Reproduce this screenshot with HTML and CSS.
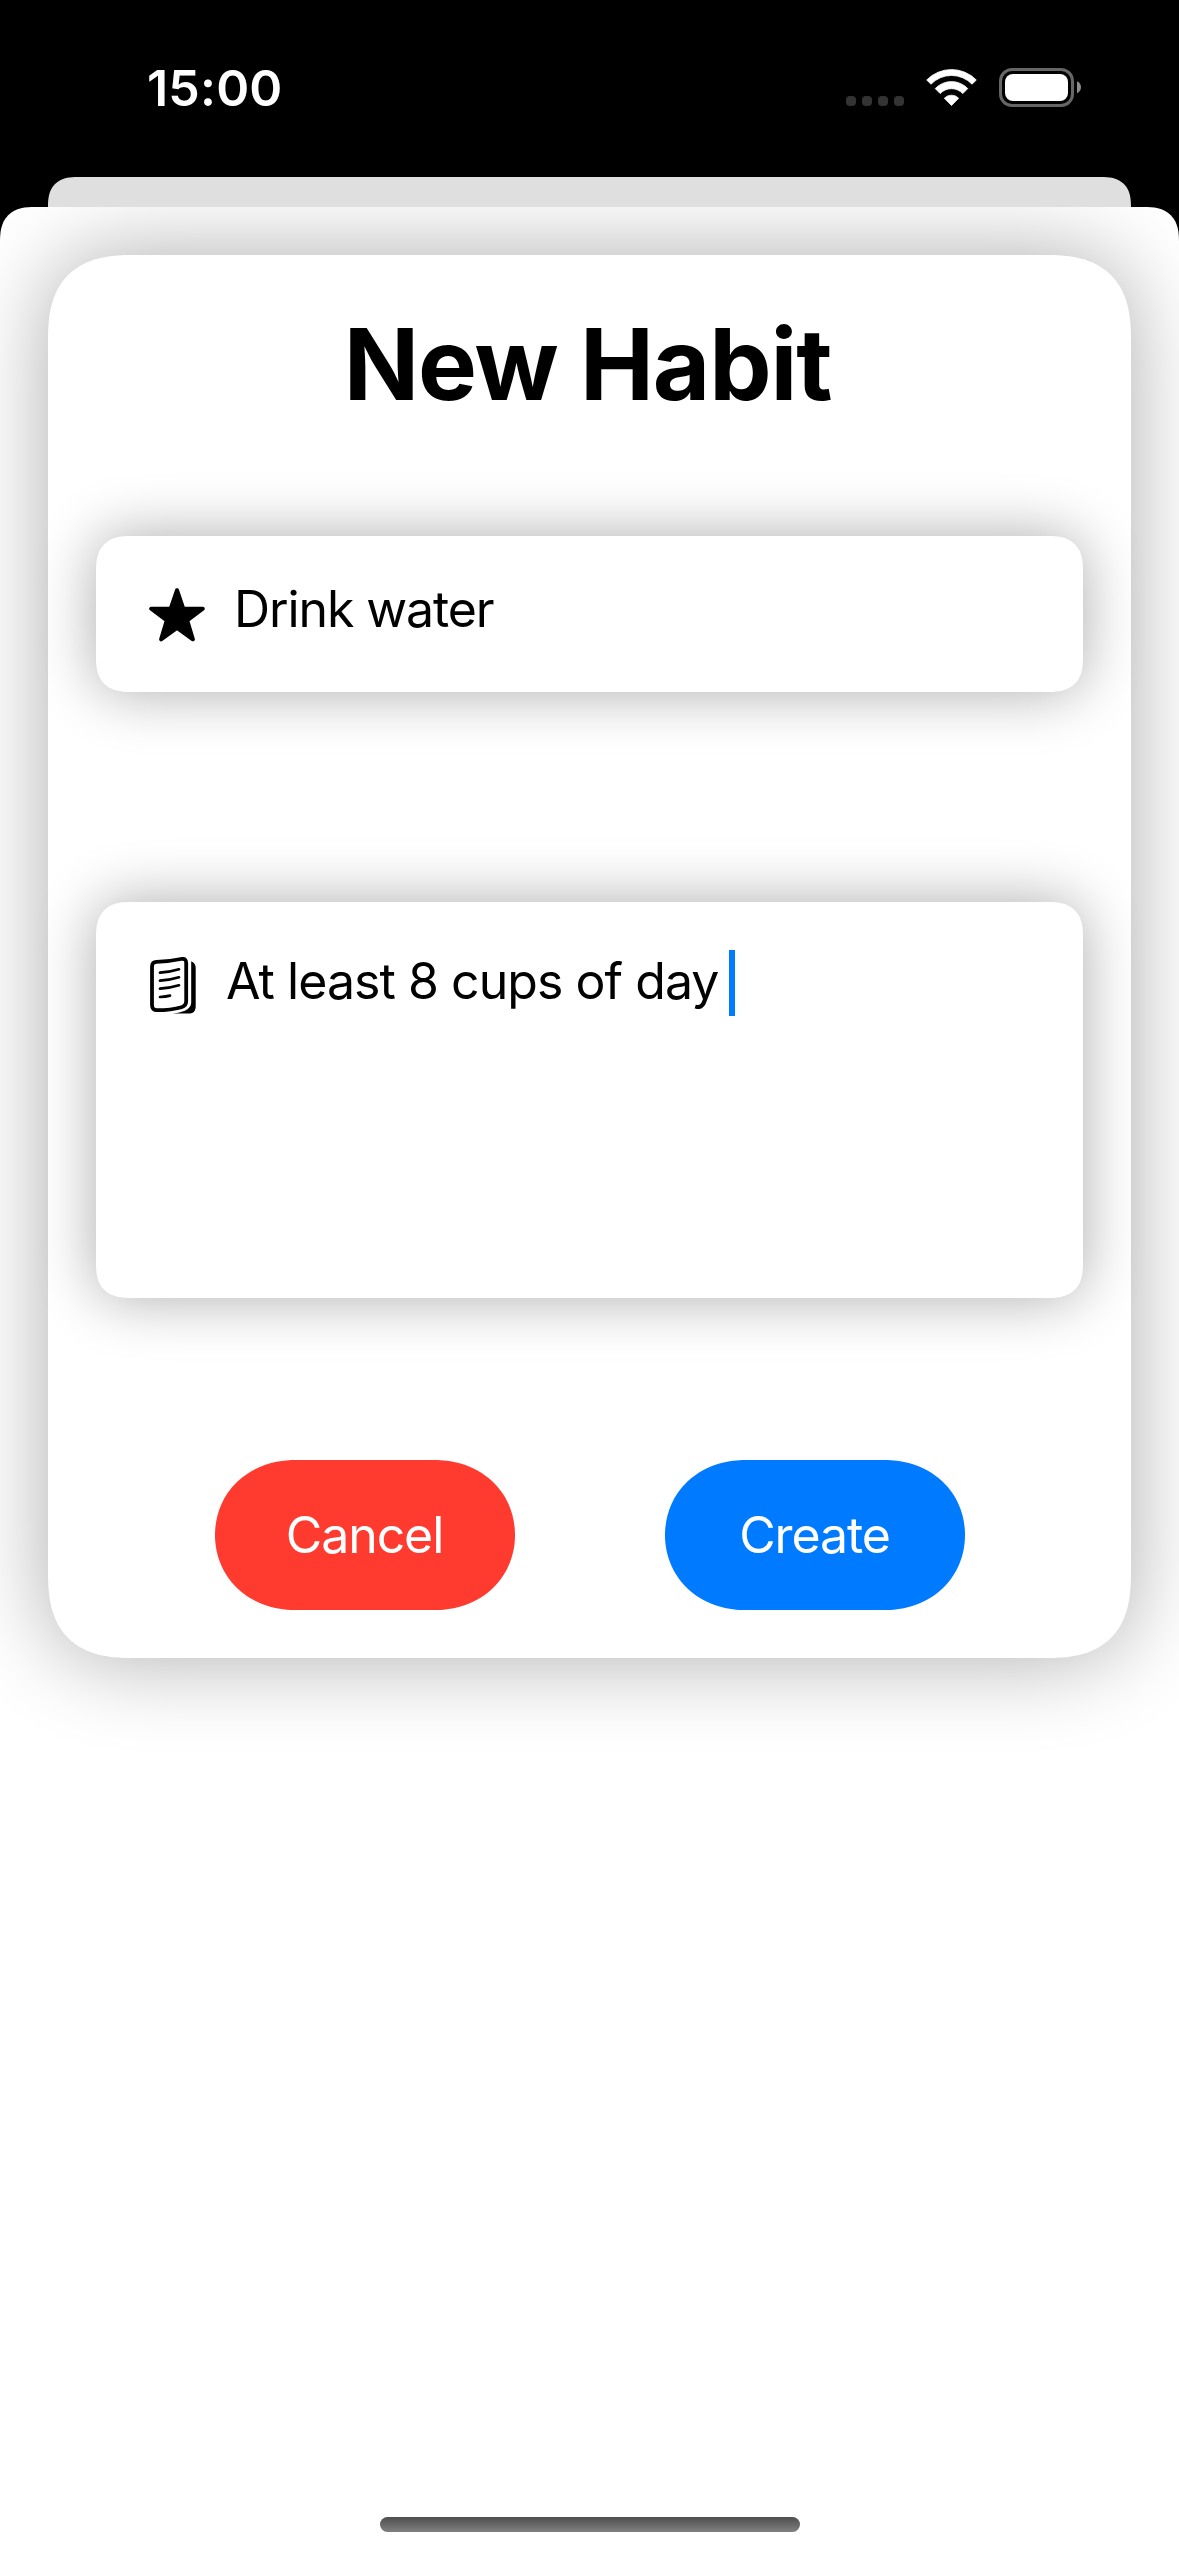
FILE: index.html
```html
<!DOCTYPE html>
<html lang="en">
<head>
<meta charset="utf-8">
<title>New Habit</title>
<link rel="stylesheet" href="styles.css">
</head>
<body>
<div class="screen">
  <header class="status-bar">
    <span class="time">15:00</span>
    <div class="indicators">
      <div class="cellular"><i></i><i></i><i></i><i></i></div>
      <svg class="wifi" width="51" height="38" viewBox="0 0 51 38" fill="#fff" stroke="#fff" stroke-width="0.8" stroke-linejoin="round">
        <path d="M.7 11A34.6 34.6 0 0 1 50.3 11L46 15.2A28.4 28.4 0 0 0 5 15.2Z"/>
        <path d="M9.2 19.6A22.4 22.4 0 0 1 41.8 19.6L36.8 24.6A15.4 15.4 0 0 0 14.2 24.6Z"/>
        <path d="M18.3 29.2A10 10 0 0 1 32.7 29.2L25.5 36.5Z"/>
      </svg>
      <svg class="battery" width="83" height="39" viewBox="0 0 83 39">
        <rect x="1.5" y="1.5" width="72" height="36" rx="11.5" fill="none" stroke="#666" stroke-width="3"/>
        <rect x="6" y="6" width="63" height="27" rx="8" fill="#fff"/>
        <path d="M78 13.2C80.500 14.300 82 16.600 82 19.200S80.500 24.100 78 25.200Z" fill="#8c8c8c"/>
      </svg>
    </div>
  </header>
  <div class="back-sheet"></div>
  <main class="sheet">
    <section class="card">
      <h1 class="title">New Habit</h1>
      <div class="field field-name">
        <svg class="star" width="56" height="54" viewBox="0 0 56 54">
          <path d="M28 2.200L34.200 20.400L53.800 20.700L38.200 32.400L43.900 51.300L28 39.900L12.100 51.300L17.800 32.400L2.200 20.700L21.800 20.400Z" fill="#000" stroke="#000" stroke-width="4" stroke-linejoin="round"/>
        </svg>
        <span class="text text-name">Drink water</span>
      </div>
      <div class="field field-note">
        <svg class="pages" width="46" height="58" viewBox="0 0 46 58" fill="none" stroke="#000" stroke-linecap="round" stroke-linejoin="round">
          <path d="M6.500 4.900C15 4.700 22 3.900 31 2C34.500 1.300 36.200 2.800 36.200 6V44C36.200 47.500 34.500 49.300 31.500 50.200C23 52.600 15.500 53.200 7 53.200C3.700 53.200 2 51.500 2 48V10C2 6.700 3.500 5 6.500 4.900Z" stroke-width="3.800"/>
          <path d="M10 15.600C17 15.200 23 14.200 29 12.300M10 23.600C17 23.200 23 22.200 29 20.300M10 31.600C17 31.200 23 30.200 29 28.300M10 40C14 39.800 17 39.400 20 38.600" stroke-width="2.700"/>
          <path d="M41.200 4.200C44.500 5.700 45.700 8 45.700 11V49C45.700 54 43.500 56.600 39 56.600H21C31 55.800 41.200 53.500 41.200 45Z" fill="#000" stroke="none"/>
        </svg>
        <span class="text text-note">At least 8 cups of day</span>
        <span class="caret"></span>
      </div>
      <div class="actions">
        <button class="button cancel"><span>Cancel</span></button>
        <button class="button create"><span>Create</span></button>
      </div>
    </section>
    <div class="home-indicator"></div>
  </main>
</div>
</body>
</html>
```
FILE: styles.css
```css
* { box-sizing: border-box; }

body {
  margin: 0;
  background: #000;
  font-family: Inter, "Liberation Sans", sans-serif;
}

.screen {
  display: flex;
  flex-direction: column;
  width: 1179px;
  height: 2556px;
  overflow: hidden;
  background: #000;
}

.status-bar {
  display: flex;
  justify-content: space-between;
  align-items: flex-start;
  height: 177px;
  padding: 68px 97px 0 147px;
  flex: none;
}

.time {
  margin-top: -10px;
  color: #fff;
  font-size: 50px;
  font-weight: 600;
  line-height: 60px;
  letter-spacing: 0.2px;
}

.indicators { display: flex; align-items: flex-start; }

.cellular { display: flex; gap: 6px; margin: 28px 22px 0 0; }
.cellular i { width: 10px; height: 10px; border-radius: 4px; background: #333; }

.wifi { margin: 1px 22px 0 0; }

.back-sheet {
  flex: none;
  height: 30px;
  margin: 0 48px;
  border-radius: 30px 30px 0 0;
  background: #dfdfdf;
}

.sheet {
  display: flex;
  flex: 1;
  flex-direction: column;
  justify-content: space-between;
  align-items: center;
  padding: 48px 48px 24px;
  overflow: hidden;
  border-radius: 30px 30px 0 0;
  background: #fff;
}

.card {
  display: flex;
  flex-direction: column;
  width: 1083px;
  height: 1403px;
  padding: 49px 48px 48px;
  border-radius: 80px;
  background: #fff;
  box-shadow: 0 0 90px rgba(0, 0, 0, 0.33);
}

.title {
  margin: 0 0 112px;
  padding-right: 4px;
  font-size: 99px;
  font-weight: 700;
  line-height: 120px;
  letter-spacing: -1.1px;
  text-align: center;
  white-space: nowrap;
}

.field {
  display: flex;
  align-items: flex-start;
  padding-left: 53px;
  border-radius: 32px;
  background: #fff;
  box-shadow: 0 0 60px rgba(0, 0, 0, 0.33);
}

.field-name { height: 156px; margin-bottom: 210px; }
.field-note { height: 396px; margin-bottom: 162px; }

.star { margin-top: 52px; }
.pages { margin: 55px 0 0 1px; }

.text {
  font-size: 50px;
  line-height: 60px;
  white-space: nowrap;
}

.text-name { margin: 43px 0 0 29px; letter-spacing: -1.1px; }
.text-note { margin: 49px 0 0 30px; letter-spacing: -0.95px; }

.caret { width: 6px; height: 66px; margin: 48px 0 0 11px; background: #007aff; }

.actions { display: flex; justify-content: center; gap: 150px; }

.button {
  width: 300px;
  height: 150px;
  padding: 0;
  border: 0;
  border-radius: 75px;
  color: #fff;
  font: 400 50px/60px Inter, "Liberation Sans", sans-serif;
  letter-spacing: -1.1px;
}

.cancel { background: #ff3b30; }
.create { background: #007aff; }

.home-indicator {
  width: 420px;
  height: 15px;
  border-radius: 8px;
  background: linear-gradient(#4e4e4e, #808080);
}

/* Continuous-curvature corners */
@supports (corner-shape: squircle) {
  .back-sheet, .sheet { border-radius: 35px 35px 0 0; corner-shape: superellipse(1.38); }
  .field { border-radius: 35px; corner-shape: superellipse(1.38); }
  .card { border-radius: 86px; corner-shape: superellipse(1.38); }
  .button { border-radius: 80px / 75px; corner-shape: superellipse(1.05); }
}
```
